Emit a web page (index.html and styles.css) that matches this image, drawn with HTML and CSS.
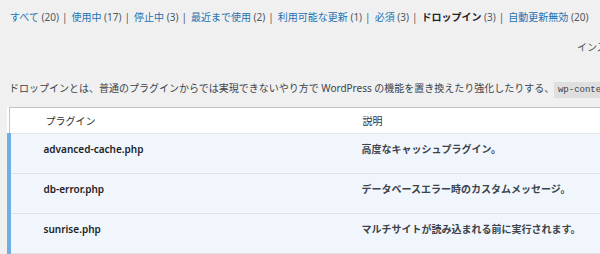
FILE: index.html
```html
<!DOCTYPE html>
<html lang="ja">
<head>
  <meta charset="UTF-8" />
  <title>プラグイン</title>
  <link rel="stylesheet" href="styles.css">
</head>
<body>
  <div class="wrap">
    <ul class="subsubsub">
      <li><a href="#">すべて <span class="count">(20)</span></a></li>
      <li><a href="#">使用中 <span class="count">(17)</span></a></li>
      <li><a href="#">停止中 <span class="count">(3)</span></a></li>
      <li><a href="#">最近まで使用 <span class="count">(2)</span></a></li>
      <li><a href="#">利用可能な更新 <span class="count">(1)</span></a></li>
      <li><a href="#">必須 <span class="count">(3)</span></a></li>
      <li><a href="#" class="current">ドロップイン <span class="count">(3)</span></a></li>
      <li><a href="#">自動更新無効 <span class="count">(20)</span></a></li>
    </ul>
    <div class="search-box">インストール済みプラグインを検索</div>
    <p class="intro">ドロップインとは、普通のプラグインからでは実現できないやり方で WordPress の機能を置き換えたり強化したりする、 <code>wp-content</code> ディレクトリ内の単独の PHP ファイルです。</p>
    <table class="plugins">
      <thead>
        <tr>
          <th class="check-column"></th>
          <th class="col-name">プラグイン</th>
          <th class="col-desc">説明</th>
        </tr>
      </thead>
      <tbody>
        <tr class="active">
          <th class="check-column"></th>
          <td class="plugin-title">advanced-cache.php</td>
          <td class="desc">高度なキャッシュプラグイン。</td>
        </tr>
        <tr class="active">
          <th class="check-column"></th>
          <td class="plugin-title">db-error.php</td>
          <td class="desc">データベースエラー時のカスタムメッセージ。</td>
        </tr>
        <tr class="active">
          <th class="check-column"></th>
          <td class="plugin-title">sunrise.php</td>
          <td class="desc">マルチサイトが読み込まれる前に実行されます。</td>
        </tr>
      </tbody>
    </table>
  </div>
</body>
</html>
```

FILE: styles.css
```css
html, body {
  margin: 0;
  padding: 0;
  overflow: hidden;
}
body {
  font-family: "Noto Sans", "Noto Sans CJK JP", sans-serif;
  font-size: 10px;
  background-color: #f0f0f1;
  color: #3c434a;
}
.wrap {
  padding-left: 7px;
  width: 1000px;
}
.subsubsub {
  list-style: none;
  margin: 0;
  padding: 8px 0 0 3px;
  line-height: 18px;
  color: #50575e;
  white-space: nowrap;
  display: flex;
}
.subsubsub li + li::before {
  content: "|";
  margin: 0 4px 0 3px;
  color: #50575e;
}
.subsubsub a {
  color: #2271b1;
  text-decoration: none;
}
.subsubsub a.current {
  color: #1d2327;
  font-weight: 700;
}
.subsubsub .count {
  color: #50575e;
  font-weight: normal;
}
.search-box {
  margin: 6px 0 0 570px;
  line-height: 30px;
  color: #50575e;
  white-space: nowrap;
}
.intro {
  margin: 16px 0 0 2px;
  height: 20px;
  line-height: 20px;
  white-space: nowrap;
}
.intro code {
  font-family: "Liberation Mono", monospace;
  font-size: 9px;
  line-height: 16px;
  display: inline-block;
  background: rgba(0, 0, 0, 0.07);
  padding: 0 4px;
  margin-left: -3px;
}
.plugins {
  margin-top: 9px;
  border: 1px solid #c3c4c7;
  border-collapse: collapse;
  background: #fff;
  width: 1000px;
  text-align: left;
}
.plugins thead th {
  height: 25px;
  padding: 0;
  font-weight: normal;
  color: #2c3338;
  border-bottom: 1px solid #e4e6e9;
}
.plugins .check-column {
  width: 30px;
  padding: 0;
}
.plugins thead .col-name {
  width: 307px;
  padding-left: 6px;
}
.plugins thead .col-desc {
  padding-left: 10px;
}
.plugins tbody tr.active {
  background-color: #f0f6fc;
}
.plugins tbody tr.active .check-column {
  border-left: 4px solid #72aee6;
  width: 26px;
}
.plugins tbody td,
.plugins tbody th {
  height: 33px;
  padding: 6px 0 0;
  line-height: 18px;
  vertical-align: top;
  border-bottom: 1px solid #dfe3e8;
}
.plugins tbody .plugin-title {
  padding-left: 4px;
  font-weight: 600;
  color: #1d2327;
}
.plugins tbody .desc {
  padding-left: 9px;
  font-weight: 700;
  color: #3c434a;
}
```
